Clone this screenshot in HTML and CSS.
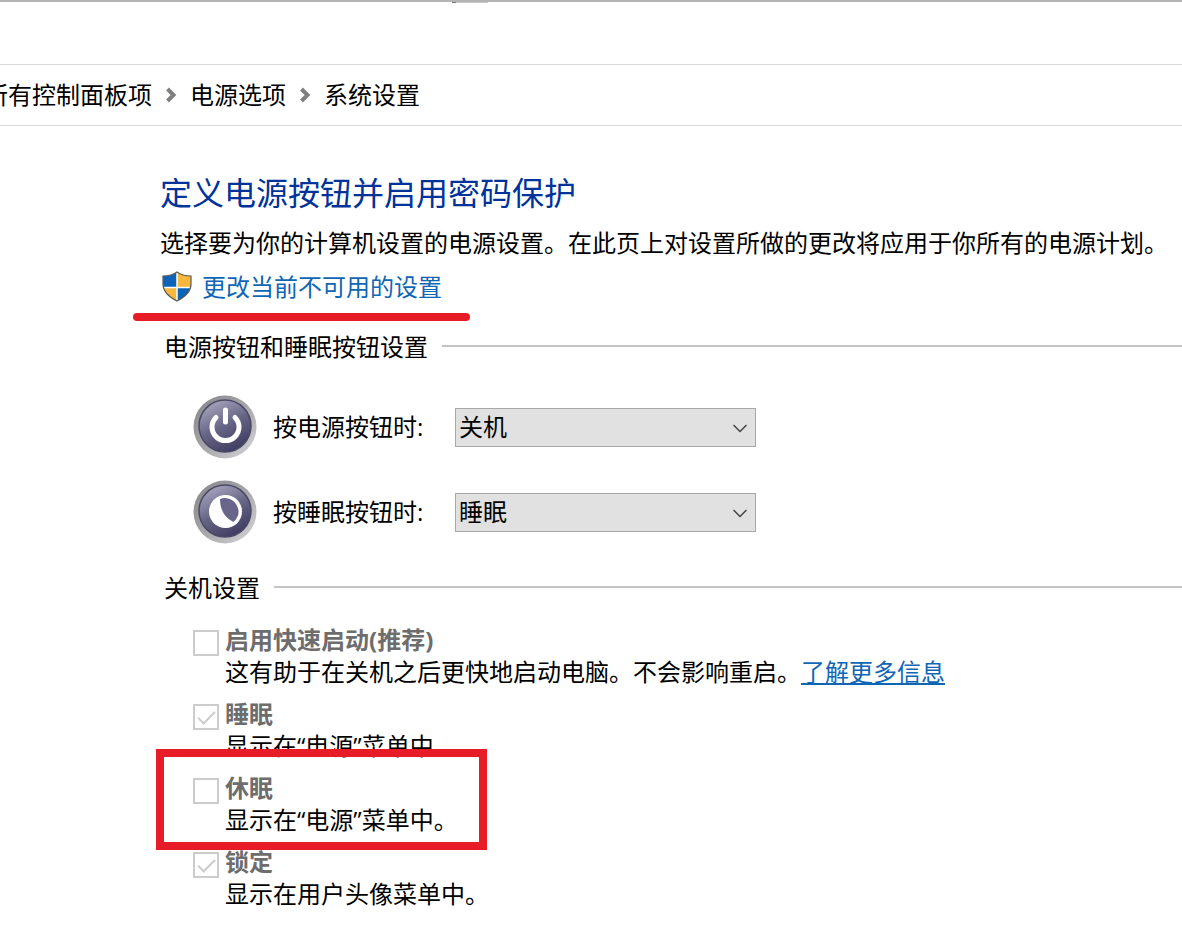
FILE: index.html
```html
<!DOCTYPE html>
<html lang="zh-CN">
<head>
    <meta charset="UTF-8">
    <meta name="viewport" content="width=device-width, initial-scale=1.0">
    <title>系统设置</title>
    <link rel="stylesheet" href="styles.css">
</head>
<body>
    <div class="titlebar"><span class="tick"></span><span class="tab-edge"></span></div>

    <!-- 地址栏 -->
    <nav class="breadcrumb">
        <a href="#">所有控制面板项</a>
        <svg width="12" height="16" viewBox="0 0 12 16"><path d="M2.500 2 8.500 8l-6 6"/></svg>
        <a href="#">电源选项</a>
        <svg width="12" height="16" viewBox="0 0 12 16"><path d="M2.500 2 8.500 8l-6 6"/></svg>
        <a href="#">系统设置</a>
    </nav>

    <main>
        <h1>定义电源按钮并启用密码保护</h1>
        <p class="intro">选择要为你的计算机设置的电源设置。在此页上对设置所做的更改将应用于你所有的电源计划。</p>
        <div class="admin">
            <svg width="30" height="32" viewBox="0 0 30 32">
                <clipPath id="shield"><path d="M15 1C11 4 6 5 1 5v8c0 8 6 13 14 17 8-4 14-9 14-17V5C24 5 19 4 15 1z"/></clipPath>
                <g clip-path="url(#shield)">
                    <path fill="#0d63b8" d="M0 0h15v16H0zM15 16h15v16H15z"/>
                    <path fill="#f8b840" d="M15 0h15v16H15zM0 16h15v16H0z"/>
                    <path stroke="#fff" stroke-width="1.500" d="M15 0v32M0 16.500h30"/>
                </g>
                <path fill="none" stroke="#5b5a50" stroke-width="1.200" d="M15 1C11 4 6 5 1 5v8c0 8 6 13 14 17 8-4 14-9 14-17V5C24 5 19 4 15 1z"/>
            </svg>
            <a href="#">更改当前不可用的设置</a>
            <span class="underline-mark"></span>
        </div>

        <!-- 按钮设置 -->
        <section>
            <h2>电源按钮和睡眠按钮设置</h2>
            <div class="row">
                <svg width="64" height="64" viewBox="0 0 64 64">
                    <defs>
                        <linearGradient id="ring" x1="0" y1="0" x2="1" y2="1">
                            <stop offset="0" stop-color="#858589"/>
                            <stop offset="0.500" stop-color="#a5a5aa"/>
                            <stop offset="1" stop-color="#d8d8dc"/>
                        </linearGradient>
                        <linearGradient id="face" x1="0.200" y1="0" x2="0.700" y2="1">
                            <stop offset="0" stop-color="#aaa9c2"/>
                            <stop offset="0.500" stop-color="#686686"/>
                            <stop offset="1" stop-color="#3d3a60"/>
                        </linearGradient>
                    </defs>
                    <circle cx="32" cy="32" r="31.500" fill="url(#ring)"/>
                    <circle cx="32" cy="31" r="26" fill="url(#face)" stroke="#4b4963" stroke-width="1.500"/>
                    <path fill="none" stroke="#fff" stroke-width="5" stroke-linecap="round" d="M23 22.500a13.500 13.500 0 1 0 19 0M32.500 15v12"/>
                </svg>
                <label for="power">按电源按钮时:</label>
                <div class="select">
                    <select id="power"><option>关机</option><option>睡眠</option></select>
                    <svg width="14" height="9" viewBox="0 0 14 9"><path d="M0.500 1 7 7.500 13.500 1"/></svg>
                </div>
            </div>
            <div class="row">
                <svg width="64" height="64" viewBox="0 0 64 64">
                    <circle cx="32" cy="32" r="31.500" fill="url(#ring)"/>
                    <circle cx="32" cy="31" r="26" fill="url(#face)" stroke="#4b4963" stroke-width="1.500"/>
                    <circle cx="32.500" cy="31.500" r="16.500" fill="#fff"/>
                    <path fill="#68668a" d="M27 19c7-3 15 1 17.500 8 2.500 6 .5 11-4 15C32 38 27 30 27 19z"/>
                </svg>
                <label for="sleep-key">按睡眠按钮时:</label>
                <div class="select">
                    <select id="sleep-key"><option>睡眠</option><option>关机</option></select>
                    <svg width="14" height="9" viewBox="0 0 14 9"><path d="M0.500 1 7 7.500 13.500 1"/></svg>
                </div>
            </div>
        </section>

        <!-- 关机设置 -->
        <section>
            <h2>关机设置</h2>
            <div class="options">
                <div class="option">
                    <input type="checkbox" id="fast" disabled>
                    <label for="fast">启用快速启动(推荐)</label>
                    <p>这有助于在关机之后更快地启动电脑。不会影响重启。<a href="#">了解更多信息</a></p>
                </div>
                <div class="option">
                    <input type="checkbox" id="sleep" checked disabled>
                    <label for="sleep">睡眠</label>
                    <p>显示在“电源”菜单中。</p>
                </div>
                <div class="option">
                    <input type="checkbox" id="hibernate" disabled>
                    <label for="hibernate">休眠</label>
                    <p>显示在“电源”菜单中。</p>
                    <span class="box-mark"></span>
                </div>
                <div class="option">
                    <input type="checkbox" id="lock" checked disabled>
                    <label for="lock">锁定</label>
                    <p>显示在用户头像菜单中。</p>
                </div>
            </div>
        </section>
    </main>
</body>
</html>
```
FILE: styles.css
```css
body {
    margin: 0;
    background-color: #fff;
    color: #000;
    font-family: "Open Sans", "Noto Sans CJK SC", sans-serif;
    font-size: 24px;
    line-height: 32px;
    overflow-x: hidden;
}
h1, h2, p {
    margin: 0;
    font-weight: inherit;
}
a {
    color: #0f66b5;
    text-decoration: none;
}

/* 窗口顶部 */
.titlebar {
    display: flex;
    height: 64px;
    box-sizing: border-box;
    border-top: 2px solid #b4b4b4;
}
.tick {
    width: 4px;
    height: 1px;
    margin-left: 452px;
    background-color: #777;
}
.tab-edge {
    width: 32px;
    height: 1px;
    background-color: #c8c8c8;
}

/* 地址栏 */
.breadcrumb {
    display: flex;
    align-items: center;
    gap: 13px;
    height: 60px;
    margin-left: -16px;
    border-top: 1px solid #d9d9d9;
    border-bottom: 1px solid #d9d9d9;
    white-space: nowrap;
}
.breadcrumb a {
    color: #000;
}
.breadcrumb path {
    fill: none;
    stroke: #808080;
    stroke-width: 4;
}

main {
    padding: 47px 0 16px 160px;
}
h1 {
    color: #003399;
    font-size: 32px;
    line-height: 40px;
}
.intro {
    margin-top: 14px;
    white-space: nowrap;
}
.admin {
    position: relative;
    display: flex;
    align-items: center;
    gap: 10px;
    margin-top: 12px;
    padding-left: 2px;
}
.underline-mark {
    position: absolute;
    left: -27px;
    top: 42px;
    width: 337px;
    height: 8px;
    border-radius: 4px;
    background-color: #e81c26;
}

/* 设置分组 */
section {
    margin-top: 28px;
    padding-left: 4px;
}
h2 {
    display: flex;
    align-items: center;
    gap: 14px;
    margin-bottom: 32px;
    font-size: 24px;
}
h2::after {
    content: "";
    flex: 1;
    height: 2px;
    margin-bottom: 2px;
    background-color: #c4c4c4;
}
.row {
    display: flex;
    align-items: center;
    gap: 16px;
    margin: 0 0 21px 29px;
}
.row label {
    width: 166px;
}
.select {
    position: relative;
}
.select select {
    display: block;
    width: 301px;
    height: 39px;
    padding: 0 3px;
    border: 1px solid #a8a8a8;
    border-radius: 0;
    background-color: #e1e1e1;
    color: #000;
    font: inherit;
    appearance: none;
}
.select svg {
    position: absolute;
    right: 9px;
    top: 16px;
    pointer-events: none;
}
.select path {
    fill: none;
    stroke: #444;
    stroke-width: 1.5;
}

/* 复选框列表 */
.options {
    display: flex;
    flex-direction: column;
    gap: 10px;
    margin: -12px 0 0 29px;
}
.option {
    position: relative;
    display: grid;
    grid-template-columns: 26px 1fr;
    column-gap: 6px;
    align-items: center;
}
.option input {
    display: grid;
    place-items: center;
    align-self: end;
    width: 26px;
    height: 26px;
    margin: 0;
    border: 2px solid #ccc;
    background-color: #fff;
    appearance: none;
}
.option input:checked::before {
    content: "";
    width: 15px;
    height: 7px;
    margin-bottom: 4px;
    border-left: 2px solid #ccc;
    border-bottom: 2px solid #ccc;
    transform: rotate(-45deg);
}
.option label {
    color: #6d6d6d;
    font-weight: 700;
}
.option p {
    grid-column: 2;
    white-space: nowrap;
}
.option p a {
    text-decoration: underline;
}
.box-mark {
    position: absolute;
    left: -37px;
    top: -23px;
    width: 315px;
    height: 85px;
    border: 8px solid #e81c26;
}
```
